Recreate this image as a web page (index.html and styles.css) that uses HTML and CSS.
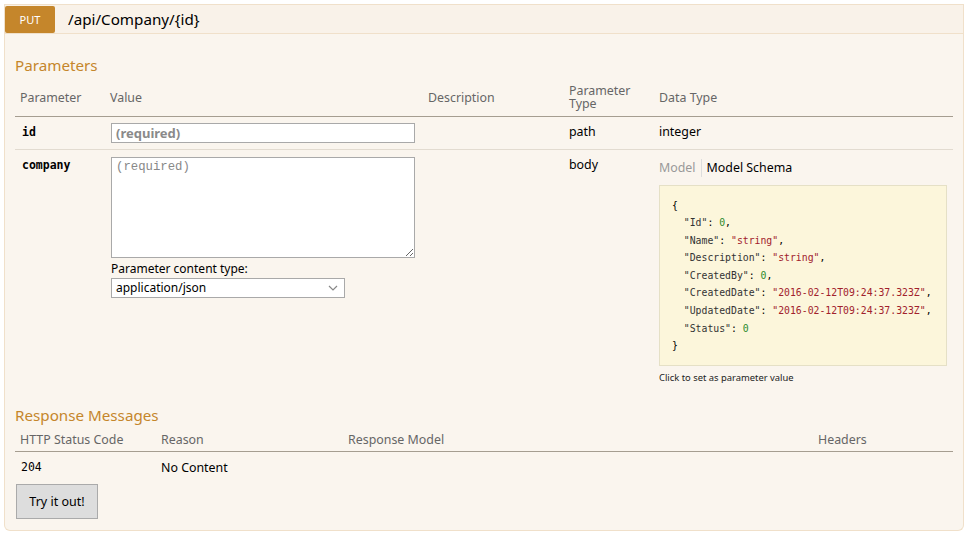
FILE: index.html
```html
<!DOCTYPE html>
<html>
<head>
<meta charset="utf-8">
<link rel="stylesheet" href="styles.css">
</head>
<body>
<div class="op">
  <div class="heading">
    <span class="method">PUT</span>
    <span class="path">/api/Company/{id}</span>
  </div>
  <div class="content">
    <h4 class="section-title first">Parameters</h4>
    <table class="params">
      <colgroup>
        <col class="c1"><col class="c2"><col class="c3"><col class="c4"><col class="c5">
      </colgroup>
      <thead>
        <tr>
          <th>Parameter</th>
          <th>Value</th>
          <th>Description</th>
          <th>Parameter<br>Type</th>
          <th>Data Type</th>
        </tr>
      </thead>
      <tbody>
        <tr>
          <td class="pname">id</td>
          <td><input class="req-input" type="text" placeholder="(required)"></td>
          <td></td>
          <td class="ptext">path</td>
          <td class="ptext">integer</td>
        </tr>
        <tr class="sep">
          <td class="pname">company</td>
          <td>
            <textarea class="body-area" placeholder="(required)"></textarea>
            <div class="ct-label">Parameter content type:</div>
            <div class="select">
              <span>application/json</span>
              <svg class="chev" width="10" height="6" viewBox="0 0 10 6"><path d="M1 1 L5 5 L9 1" fill="none" stroke="#888" stroke-width="1.2"/></svg>
            </div>
          </td>
          <td></td>
          <td class="ptext">body</td>
          <td>
            <div class="tabs"><span class="tab off">Model</span><span class="tab on">Model Schema</span></div>
            <div class="snippet"><pre>{
  <span class="k">"Id"</span>: <span class="n">0</span>,
  <span class="k">"Name"</span>: <span class="s">"string"</span>,
  <span class="k">"Description"</span>: <span class="s">"string"</span>,
  <span class="k">"CreatedBy"</span>: <span class="n">0</span>,
  <span class="k">"CreatedDate"</span>: <span class="s">"2016-02-12T09:24:37.323Z"</span>,
  <span class="k">"UpdatedDate"</span>: <span class="s">"2016-02-12T09:24:37.323Z"</span>,
  <span class="k">"Status"</span>: <span class="n">0</span>
}</pre></div>
            <div class="hint">Click to set as parameter value</div>
          </td>
        </tr>
      </tbody>
    </table>

    <h4 class="section-title second">Response Messages</h4>
    <table class="responses">
      <colgroup>
        <col class="r1"><col class="r2"><col class="r3"><col class="r4">
      </colgroup>
      <thead>
        <tr>
          <th>HTTP Status Code</th>
          <th>Reason</th>
          <th>Response Model</th>
          <th>Headers</th>
        </tr>
      </thead>
      <tbody>
        <tr>
          <td class="code">204</td>
          <td class="rtext">No Content</td>
          <td></td>
          <td></td>
        </tr>
      </tbody>
    </table>
    <div class="actions"><button class="try">Try it out!</button></div>
  </div>
</div>
</body>
</html>
```
FILE: styles.css
```css
* { box-sizing: border-box; }
html, body { margin: 0; padding: 0; background: #fff; }
body {
  font-family: "Noto Sans", "Open Sans", sans-serif;
  color: #000;
  width: 970px;
  height: 536px;
  overflow: hidden;
}
.op {
  margin: 4px 6px 0 4px;
}
.heading {
  display: flex;
  align-items: center;
  height: 30px;
  background: #f9f2e9;
  border: 1px solid #f0e0ca;
}
.method {
  width: 50px;
  height: 27px;
  background: #c5862b;
  color: #fff;
  font-size: 11px;
  display: flex;
  align-items: center;
  justify-content: center;
  border-radius: 2px;
  padding-top: 1px;
}
.path {
  font-size: 15.2px;
  margin-left: 13px;
  color: #000;
  line-height: 20px;
}
.content {
  background: #faf5ee;
  border: 1px solid #f0e0ca;
  border-top: none;
  padding: 10px;
  height: 497px;
  border-radius: 0 0 6px 6px;
}
.section-title {
  margin: 11px 0 4px;
  font-size: 15.2px;
  line-height: 20px;
  font-weight: normal;
  color: #c5862b;
}
.section-title.first { margin-bottom: 5px; }
.section-title.second { margin-top: 14px; }

table { border-collapse: collapse; table-layout: fixed; width: 938px; }
.c1 { width: 90px; } .c2 { width: 318px; } .c3 { width: 141px; } .c4 { width: 90px; } .c5 { width: 299px; }
.r1 { width: 141px; } .r2 { width: 187px; } .r3 { width: 470px; } .r4 { width: 140px; }

th {
  text-align: left;
  font-weight: normal;
  font-size: 12.4px;
  line-height: 13px;
  color: #666;
  padding: 4px 0 5px 5px;
  vertical-align: middle;
  border-bottom: 1px solid #a59d90;
}
.params thead th { height: 36px; }
td {
  vertical-align: top;
  padding: 6px 0 6px 5px;
  font-size: 12.4px;
  line-height: 16px;
}
.params tbody tr.sep td { border-top: 1px solid #e2dbd0; }
.params tbody tr:first-child td { height: 33px; }
.pname {
  font-family: "DejaVu Sans Mono", monospace;
  font-weight: bold;
  font-size: 11.5px;
  padding-left: 7px;
  padding-top: 7px;
}
.ptext { color: #000; padding-top: 7px; }
.req-input {
  display: block;
  width: 304px;
  height: 20px;
  margin: 0 0 0 1px;
  border: 1px solid #a9a9a9;
  background: #fff;
  padding: 0 4px;
  font-family: "Noto Sans", sans-serif;
  font-weight: bold;
  font-size: 13px;
  color: #888;
}
.req-input::placeholder { color: #8a8a8a; font-weight: bold; opacity: 1; }
.body-area {
  display: block;
  width: 304px;
  height: 101px;
  margin: 1px 0 0 1px;
  border: 1px solid #a9a9a9;
  background: #fff;
  padding: 2px 4px;
  font-family: "Liberation Mono", "Courier New", monospace;
  font-size: 12.3px;
  resize: vertical;
}
.body-area::placeholder {
  color: #888;
  opacity: 1;
  font-family: "Liberation Mono", "Courier New", monospace;
}
.ct-label {
  font-size: 12px;
  line-height: 16px;
  margin: 3px 0 0 1px;
  color: #000;
}
.select {
  display: flex;
  align-items: center;
  justify-content: space-between;
  width: 234px;
  height: 20px;
  margin: 1px 0 0 1px;
  border: 1px solid #a9a9a9;
  background: #fff;
  padding: 0 4px;
  font-size: 12px;
  color: #000;
}
.chev { margin-right: 2px; }
.tabs {
  display: flex;
  align-items: center;
  margin-top: 3px;
  height: 18px;
}
.tab { font-size: 12.4px; line-height: 18px; }
.tab.off { color: #999; padding-right: 5px; border-right: 1px solid #ddd; }
.tab.on { color: #000; padding-left: 5px; }
.snippet {
  margin-top: 8px;
  width: 288px;
  background: #fcf6db;
  border: 1px solid #e5e0c6;
  padding: 11px 12px 10px;
}
.snippet pre {
  margin: 0;
  font-family: "DejaVu Sans Mono", monospace;
  font-size: 9.8px;
  line-height: 17.6px;
  color: #000;
}
.k { color: #333; }
.s { color: #a1212c; }
.n { color: #2b8a2b; }
.hint { font-size: 9.4px; line-height: 14px; margin-top: 5px; color: #222; }

.responses th { padding-top: 4px; padding-bottom: 4px; line-height: 14px; }
.code {
  font-family: "DejaVu Sans Mono", monospace;
  font-size: 11.5px;
  padding-left: 6px;
  padding-top: 7px;
}
.rtext { padding-top: 8px; }
.actions { margin-top: 2px; padding-left: 1px; }
.try {
  width: 82px;
  height: 35px;
  background: #ddd;
  border: 1px solid #aaa;
  font-family: "Noto Sans", sans-serif;
  font-size: 12.5px;
  color: #000;
  padding: 0;
}
```
